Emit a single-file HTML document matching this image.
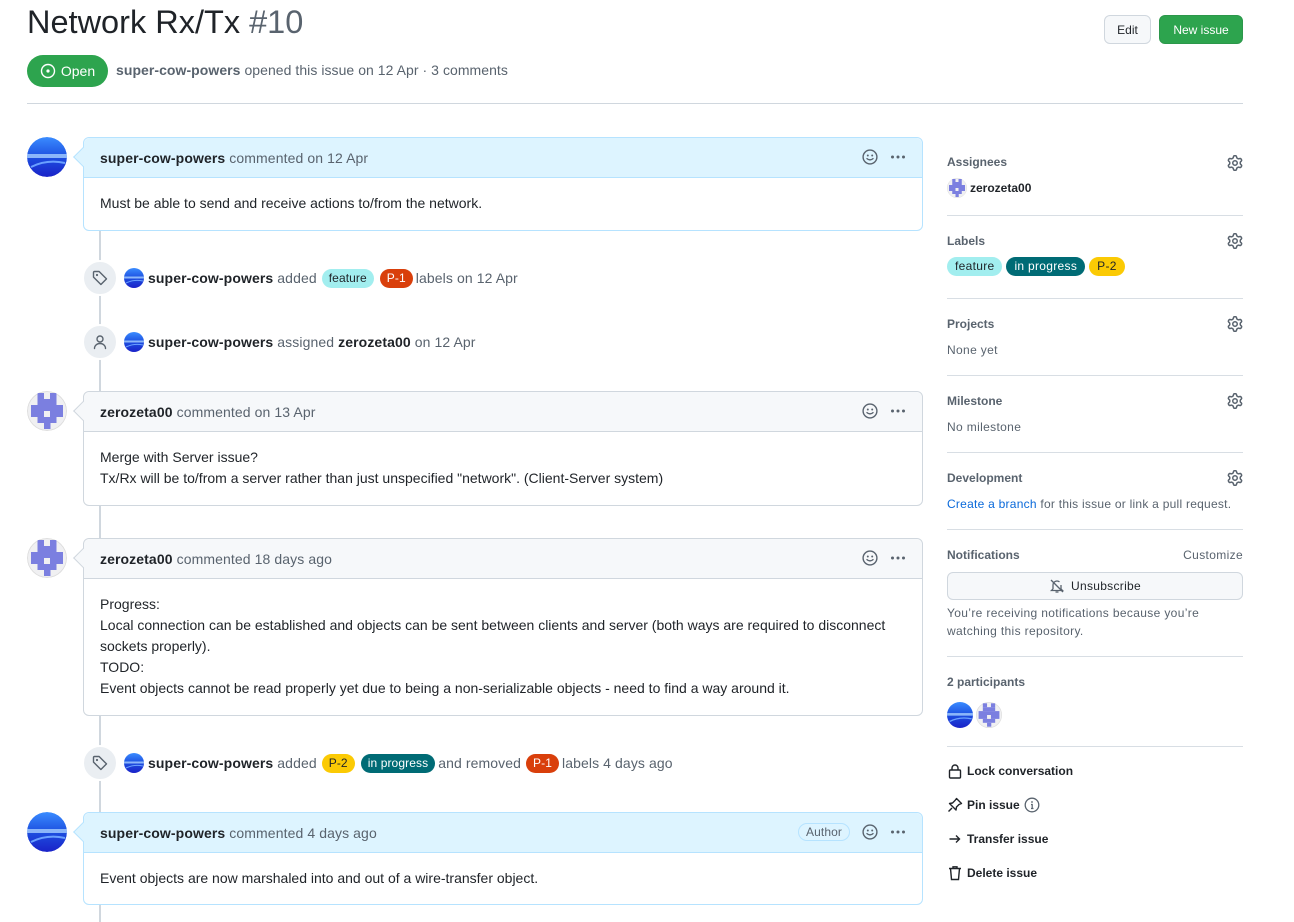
<!DOCTYPE html>
<html><head><meta charset="utf-8"><style>
*{box-sizing:border-box}
body{margin:0;width:1294px;height:922px;overflow:hidden;background:#fff;font-family:"Liberation Sans",sans-serif;color:#1f2328;font-size:14px;position:relative}
.a{position:absolute}
h1{position:absolute;left:27px;top:4px;margin:0;font-size:32.5px;font-weight:400;white-space:nowrap}
.btn{position:absolute;border-radius:6px;font-size:12px;display:flex;align-items:center;justify-content:center;height:29px}
.box{position:absolute;left:83px;width:840px;border:1px solid #d0d7de;border-radius:6px;background:#fff}
.box.blue{border-color:#b6e3ff}
.hd{height:40px;border-bottom:1px solid #d0d7de;background:#f6f8fa;border-radius:6px 6px 0 0;display:flex;align-items:center;padding-left:16px;color:#59636e;position:relative;letter-spacing:.1px}
.blue .hd{background:#ddf4ff;border-color:#b6e3ff}
.hd b{color:#1f2328;margin-right:4px}
.hd .r{position:absolute;right:16px;top:11px;display:flex;align-items:center;gap:12px}
.bd{padding:15px 16px 16px;line-height:21px}
.arrow{position:absolute;left:-8px;top:12px;width:14px;height:14px;transform:rotate(45deg);border-left:1px solid #d0d7de;border-bottom:1px solid #d0d7de;background:#f6f8fa}
.blue .arrow{background:#ddf4ff;border-color:#b6e3ff}
.av{position:absolute;left:27px;width:40px;height:40px;border-radius:50%;overflow:hidden}
.line{position:absolute;left:99px;width:2px;background:#d0d7de}
.ev{position:absolute;left:84px;display:flex;align-items:center;color:#59636e;white-space:nowrap;letter-spacing:.1px}
.ei{width:32px;height:32px;border-radius:50%;background:#eaeef2;display:flex;align-items:center;justify-content:center;margin-right:6px;border:2px solid #fff;box-sizing:content-box;margin-left:-2px}
.ev b{color:#1f2328;margin:0 4px 0 4px}
.lb{display:inline-block;border-radius:10px;padding:0 8px;font-size:12px;line-height:19px;margin:0 3px;letter-spacing:.3px}
.ev .lb{padding:0 7px;letter-spacing:.1px}
.sb{position:absolute;left:947px;width:296px}
.sec{border-bottom:1px solid #d8dee4;position:relative}
.sh{font-size:12px;font-weight:bold;color:#59636e}
.gear{position:absolute;right:0}
.muted{font-size:12px;color:#59636e;letter-spacing:.35px}
.act{font-size:12px;font-weight:bold;display:flex;align-items:center;gap:4px;position:absolute;left:0}
</style></head><body>
<svg width="0" height="0" style="position:absolute"><defs>
<linearGradient id="g1" x1="0" y1="0" x2="0" y2="1"><stop offset="0" stop-color="#3a8cff"/><stop offset=".5" stop-color="#1d4fe0"/><stop offset="1" stop-color="#1a22c8"/></linearGradient>
<symbol id="cow" viewBox="0 0 40 40"><circle cx="20" cy="20" r="20" fill="url(#g1)"/><rect x="0" y="17" width="40" height="4" fill="#a8d0ff" opacity=".8"/><path d="M4 30 Q20 22 38 26" stroke="#6aa0ff" stroke-width="2" fill="none"/></symbol>
<symbol id="zz" viewBox="0 0 40 40"><circle cx="20" cy="20" r="19.5" fill="#f0f0f2" stroke="#ddd"/><g fill="#7b7fe0"><rect x="10.5" y="2" width="6.5" height="6"/><rect x="23" y="2" width="6.5" height="6"/><rect x="10.5" y="8" width="19" height="6"/><rect x="4" y="14" width="32" height="6"/><rect x="4" y="20" width="13" height="6"/><rect x="23" y="20" width="13" height="6"/><rect x="10.5" y="26" width="19" height="6"/><rect x="17" y="32" width="6.5" height="6"/></g></symbol>
<symbol id="gear" viewBox="0 0 16 16"><path fill="#59636e" d="M8 0a8.2 8.2 0 0 1 .701.031C9.444.095 9.99.645 10.16 1.290l.288 1.107c.018.066.079.158.212.224.231.114.454.243.668.386.123.082.233.09.299.071l1.103-.303c.644-.176 1.392.021 1.820.63.27.385.506.792.704 1.218.315.675.111 1.422-.364 1.891l-.814.806c-.049.048-.098.147-.088.294.016.257.016.515 0 .772-.01.147.038.246.088.294l.814.806c.475.469.679 1.216.364 1.891a7.977 7.977 0 0 1-.704 1.217c-.428.61-1.176.807-1.820.63l-1.102-.302c-.067-.019-.177-.011-.3.071a5.909 5.909 0 0 1-.668.386c-.133.066-.194.158-.211.224l-.29 1.106c-.168.646-.715 1.196-1.458 1.260a8.006 8.006 0 0 1-1.402 0c-.743-.064-1.289-.614-1.458-1.260l-.289-1.106c-.018-.066-.079-.158-.212-.224a5.738 5.738 0 0 1-.668-.386c-.123-.082-.233-.09-.299-.071l-1.103.303c-.644.176-1.392-.021-1.820-.63a8.12 8.12 0 0 1-.704-1.218c-.315-.675-.111-1.422.363-1.891l.815-.806c.05-.048.098-.147.088-.294a6.214 6.214 0 0 1 0-.772c.01-.147-.038-.246-.088-.294l-.815-.806C.635 6.045.431 5.298.746 4.623a7.92 7.92 0 0 1 .704-1.217c.428-.61 1.176-.807 1.820-.63l1.102.302c.067.019.177.011.3-.071.214-.143.437-.272.668-.386.133-.066.194-.158.211-.224l.29-1.106C6.009.645 6.556.095 7.299.03 7.530.01 7.764 0 8 0Zm-.571 1.525c-.036.003-.108.036-.137.146l-.289 1.105c-.147.561-.549.967-.998 1.189-.173.086-.34.183-.5.29-.417.278-.97.423-1.529.27l-1.103-.303c-.109-.03-.175.016-.195.045-.22.312-.412.644-.573.99-.014.031-.021.11.059.19l.815.806c.411.406.562.957.53 1.456a4.709 4.709 0 0 0 0 .582c.032.499-.119 1.050-.53 1.456l-.815.806c-.081.08-.073.159-.059.19.162.346.353.677.573.989.02.03.085.076.195.046l1.102-.303c.56-.153 1.113-.008 1.530.27.161.107.328.204.501.29.447.222.85.629.997 1.189l.289 1.105c.029.109.101.143.137.146a6.6 6.6 0 0 0 1.142 0c.036-.003.108-.036.137-.146l.289-1.105c.147-.561.549-.967.998-1.189.173-.086.34-.183.5-.29.417-.278.97-.423 1.529-.27l1.103.303c.109.029.175-.016.195-.045.22-.313.411-.644.573-.99.014-.031.021-.11-.059-.19l-.815-.806c-.411-.406-.562-.957-.53-1.456a4.709 4.709 0 0 0 0-.582c-.032-.499.119-1.050.53-1.456l.815-.806c.081-.08.073-.159.059-.19a6.464 6.464 0 0 0-.573-.989c-.02-.03-.085-.076-.195-.046l-1.102.303c-.56.153-1.113.008-1.530-.27a4.44 4.44 0 0 0-.501-.29c-.447-.222-.85-.629-.997-1.189l-.289-1.105c-.029-.11-.101-.143-.137-.146a6.6 6.6 0 0 0-1.142 0ZM11 8a3 3 0 1 1-6 0 3 3 0 0 1 6 0ZM9.5 8a1.5 1.5 0 1 0-3.001.001A1.5 1.5 0 0 0 9.5 8Z"/></symbol>
<symbol id="smile" viewBox="0 0 16 16"><circle cx="8" cy="8" r="6.9" fill="none" stroke="#59636e" stroke-width="1.4"/><circle cx="5.8" cy="6.5" r="1" fill="#59636e"/><circle cx="10.2" cy="6.5" r="1" fill="#59636e"/><path d="M5 9.6q3 2.6 6 0" stroke="#59636e" stroke-width="1.4" fill="none" stroke-linecap="round"/></symbol>
<symbol id="dots" viewBox="0 0 16 16"><circle cx="2.5" cy="8" r="1.5" fill="#59636e"/><circle cx="8" cy="8" r="1.5" fill="#59636e"/><circle cx="13.5" cy="8" r="1.5" fill="#59636e"/></symbol>
<symbol id="tag" viewBox="0 0 16 16"><path d="M1.5 2.5a1 1 0 0 1 1-1h4.6l7.4 7.4-5.6 5.6-7.4-7.4z" fill="none" stroke="#59636e" stroke-width="1.4" stroke-linejoin="round"/><circle cx="5" cy="5" r="1.1" fill="#59636e"/></symbol>
<symbol id="person" viewBox="0 0 16 16"><circle cx="8" cy="5" r="3" fill="none" stroke="#59636e" stroke-width="1.4"/><path d="M2.5 14.5c0-3 2.5-5 5.5-5s5.5 2 5.5 5" fill="none" stroke="#59636e" stroke-width="1.4" stroke-linecap="round"/></symbol>
</defs></svg>

<h1>Network Rx/Tx <span style="color:#59636e">#10</span></h1>
<div class="btn" style="left:1104px;top:15px;width:47px;background:#f6f8fa;border:1px solid #d0d7de">Edit</div>
<div class="btn" style="left:1159px;top:15px;width:84px;background:#2da44e;color:#fff;border:1px solid #2c974b">New issue</div>
<div class="a" style="left:27px;top:55px;width:81px;height:32px;border-radius:16px;background:#2da44e;color:#fff;display:flex;align-items:center;justify-content:center;font-size:14px;gap:5px"><svg width="16" height="16" viewBox="0 0 16 16"><circle cx="8" cy="8" r="6.5" fill="none" stroke="#fff" stroke-width="1.4"/><circle cx="8" cy="8" r="1.6" fill="#fff"/></svg>Open</div>
<div class="a" style="left:116px;top:62px;color:#59636e;white-space:nowrap;letter-spacing:.05px"><b>super-cow-powers</b> opened this issue on 12 Apr · 3 comments</div>
<div class="a" style="left:27px;top:103px;width:1216px;height:1px;background:#d0d7de"></div>

<div class="line" style="top:230px;height:692px"></div>

<svg class="av" style="top:137px" width="40" height="40"><use href="#cow"/></svg>
<div class="box blue" style="top:137px;height:94px"><div class="arrow"></div><div class="hd"><b>super-cow-powers</b> commented on 12 Apr<div class="r"><svg width="16" height="16"><use href="#smile"/></svg><svg width="16" height="16"><use href="#dots"/></svg></div></div><div class="bd">Must be able to send and receive actions to/from the network.</div></div>

<div class="ev" style="top:260px"><div class="ei"><svg width="16" height="16"><use href="#tag"/></svg></div><svg width="20" height="20"><use href="#cow"/></svg><b>super-cow-powers</b> added <span class="lb" style="background:#a2eeef;color:#1f2328;margin-left:5px">feature</span><span class="lb" style="background:#d93f0b;color:#fff">P-1</span> labels on 12 Apr</div>
<div class="ev" style="top:324px"><div class="ei"><svg width="16" height="16"><use href="#person"/></svg></div><svg width="20" height="20"><use href="#cow"/></svg><b>super-cow-powers</b> assigned <b style="margin-left:4px">zerozeta00</b>on 12 Apr</div>

<svg class="av" style="top:391px" width="40" height="40"><use href="#zz"/></svg>
<div class="box" style="top:391px;height:115px"><div class="arrow"></div><div class="hd"><b>zerozeta00</b> commented on 13 Apr<div class="r"><svg width="16" height="16"><use href="#smile"/></svg><svg width="16" height="16"><use href="#dots"/></svg></div></div><div class="bd">Merge with Server issue?<br>Tx/Rx will be to/from a server rather than just unspecified "network". (Client-Server system)</div></div>

<svg class="av" style="top:538px" width="40" height="40"><use href="#zz"/></svg>
<div class="box" style="top:538px;height:178px"><div class="arrow"></div><div class="hd"><b>zerozeta00</b> commented 18 days ago<div class="r"><svg width="16" height="16"><use href="#smile"/></svg><svg width="16" height="16"><use href="#dots"/></svg></div></div><div class="bd">Progress:<br>Local connection can be established and objects can be sent between clients and server (both ways are required to disconnect sockets properly).<br>TODO:<br>Event objects cannot be read properly yet due to being a non-serializable objects - need to find a way around it.</div></div>

<div class="ev" style="top:745px"><div class="ei"><svg width="16" height="16"><use href="#tag"/></svg></div><svg width="20" height="20"><use href="#cow"/></svg><b>super-cow-powers</b> added <span class="lb" style="background:#fbca04;color:#1f2328;margin-left:5px">P-2</span><span class="lb" style="background:#006b75;color:#fff">in progress</span> and removed <span class="lb" style="background:#d93f0b;color:#fff;margin-left:5px">P-1</span> labels 4 days ago</div>

<svg class="av" style="top:812px" width="40" height="40"><use href="#cow"/></svg>
<div class="box blue" style="top:812px;height:93px"><div class="arrow"></div><div class="hd"><b>super-cow-powers</b> commented 4 days ago<div class="r" style="top:10px"><span style="border:1px solid #b6e3ff;border-radius:10px;padding:1px 7px;font-size:12px;color:#59636e">Author</span><svg width="16" height="16"><use href="#smile"/></svg><svg width="16" height="16"><use href="#dots"/></svg></div></div><div class="bd">Event objects are now marshaled into and out of a wire-transfer object.</div></div>

<!-- sidebar -->
<div class="sb" style="top:147px">
<div class="sec" style="height:69px"><div class="sh" style="padding-top:8px">Assignees</div><svg class="gear" style="top:8px" width="16" height="16"><use href="#gear"/></svg>
<div style="display:flex;align-items:center;gap:3px;margin-top:9px;font-size:12px;font-weight:bold"><svg width="20" height="20"><use href="#zz"/></svg>zerozeta00</div></div>
<div class="sec" style="height:83px"><div class="sh" style="padding-top:18px">Labels</div><svg class="gear" style="top:17px" width="16" height="16"><use href="#gear"/></svg>
<div style="margin-top:9px;margin-left:-3px"><span class="lb" style="background:#a2eeef">feature</span><span class="lb" style="background:#006b75;color:#fff;margin-left:1px">in progress</span><span class="lb" style="background:#fbca04;margin-left:1px">P-2</span></div></div>
<div class="sec" style="height:77px"><div class="sh" style="padding-top:18px">Projects</div><svg class="gear" style="top:17px" width="16" height="16"><use href="#gear"/></svg><div class="muted" style="margin-top:12px">None yet</div></div>
<div class="sec" style="height:77px"><div class="sh" style="padding-top:18px">Milestone</div><svg class="gear" style="top:17px" width="16" height="16"><use href="#gear"/></svg><div class="muted" style="margin-top:12px">No milestone</div></div>
<div class="sec" style="height:77px"><div class="sh" style="padding-top:18px">Development</div><svg class="gear" style="top:17px" width="16" height="16"><use href="#gear"/></svg><div class="muted" style="margin-top:12px;letter-spacing:.25px"><span style="color:#0969da">Create a branch</span> for this issue or link a pull request.</div></div>
<div class="sec" style="height:127px"><div class="sh" style="padding-top:18px">Notifications</div><span class="muted" style="position:absolute;right:0;top:18px">Customize</span>
<div style="margin-top:10px;height:28px;border:1px solid #d0d7de;border-radius:6px;background:#f6f8fa;display:flex;align-items:center;justify-content:center;gap:6px;font-size:12px;letter-spacing:.3px"><svg width="16" height="16" viewBox="0 0 16 16" fill="none" stroke="#59636e" stroke-width="1.3"><path d="M4 11V7a4 4 0 0 1 6.5-3.1M12 7v4l1.5 1.5h-11L4 11"/><path d="M6.5 14h3"/><path d="M2 2l12 12"/></svg>Unsubscribe</div>
<div class="muted" style="margin-top:4px;line-height:18px">You’re receiving notifications because you’re<br>watching this repository.</div></div>
<div class="sec" style="height:90px"><div class="sh" style="padding-top:18px">2 participants</div><div style="margin-top:13px;display:flex;gap:3px"><svg width="26" height="26"><use href="#cow"/></svg><svg width="26" height="26"><use href="#zz"/></svg></div></div>
<div style="position:relative;height:140px">
<div class="act" style="top:16px"><svg width="16" height="16" viewBox="0 0 16 16" fill="none" stroke="#1f2328" stroke-width="1.4"><rect x="2.5" y="7" width="11" height="8" rx="1"/><path d="M5 7V5a3 3 0 0 1 6 0v2"/></svg>Lock conversation</div>
<div class="act" style="top:50px"><svg width="16" height="16" viewBox="0 0 16 16" fill="none" stroke="#1f2328" stroke-width="1.4" stroke-linejoin="round"><path d="M9.5 1.5l5 5-2.5 1-2.5 2.5-.5 3L2.5 6.5l3-.5L8 3.5z"/><path d="M5 11l-3.5 3.5"/></svg>Pin issue <svg width="16" height="16" viewBox="0 0 16 16"><circle cx="8" cy="8" r="6.8" fill="none" stroke="#59636e" stroke-width="1.3"/><circle cx="8" cy="5" r=".9" fill="#59636e"/><path d="M7 7.5h1.2v4M7 11.5h2.5" stroke="#59636e" stroke-width="1.2" fill="none"/></svg></div>
<div class="act" style="top:84px"><svg width="16" height="16" viewBox="0 0 16 16" fill="none" stroke="#1f2328" stroke-width="1.4"><path d="M2.5 8h10M9 4.5L12.5 8 9 11.5"/></svg>Transfer issue</div>
<div class="act" style="top:118px"><svg width="16" height="16" viewBox="0 0 16 16" fill="none" stroke="#1f2328" stroke-width="1.4"><path d="M2 3.5h12M6 3.5V1.8h4v1.7M3.5 3.5l1 11h7l1-11"/></svg>Delete issue</div>
</div>
</div>
</body></html>
